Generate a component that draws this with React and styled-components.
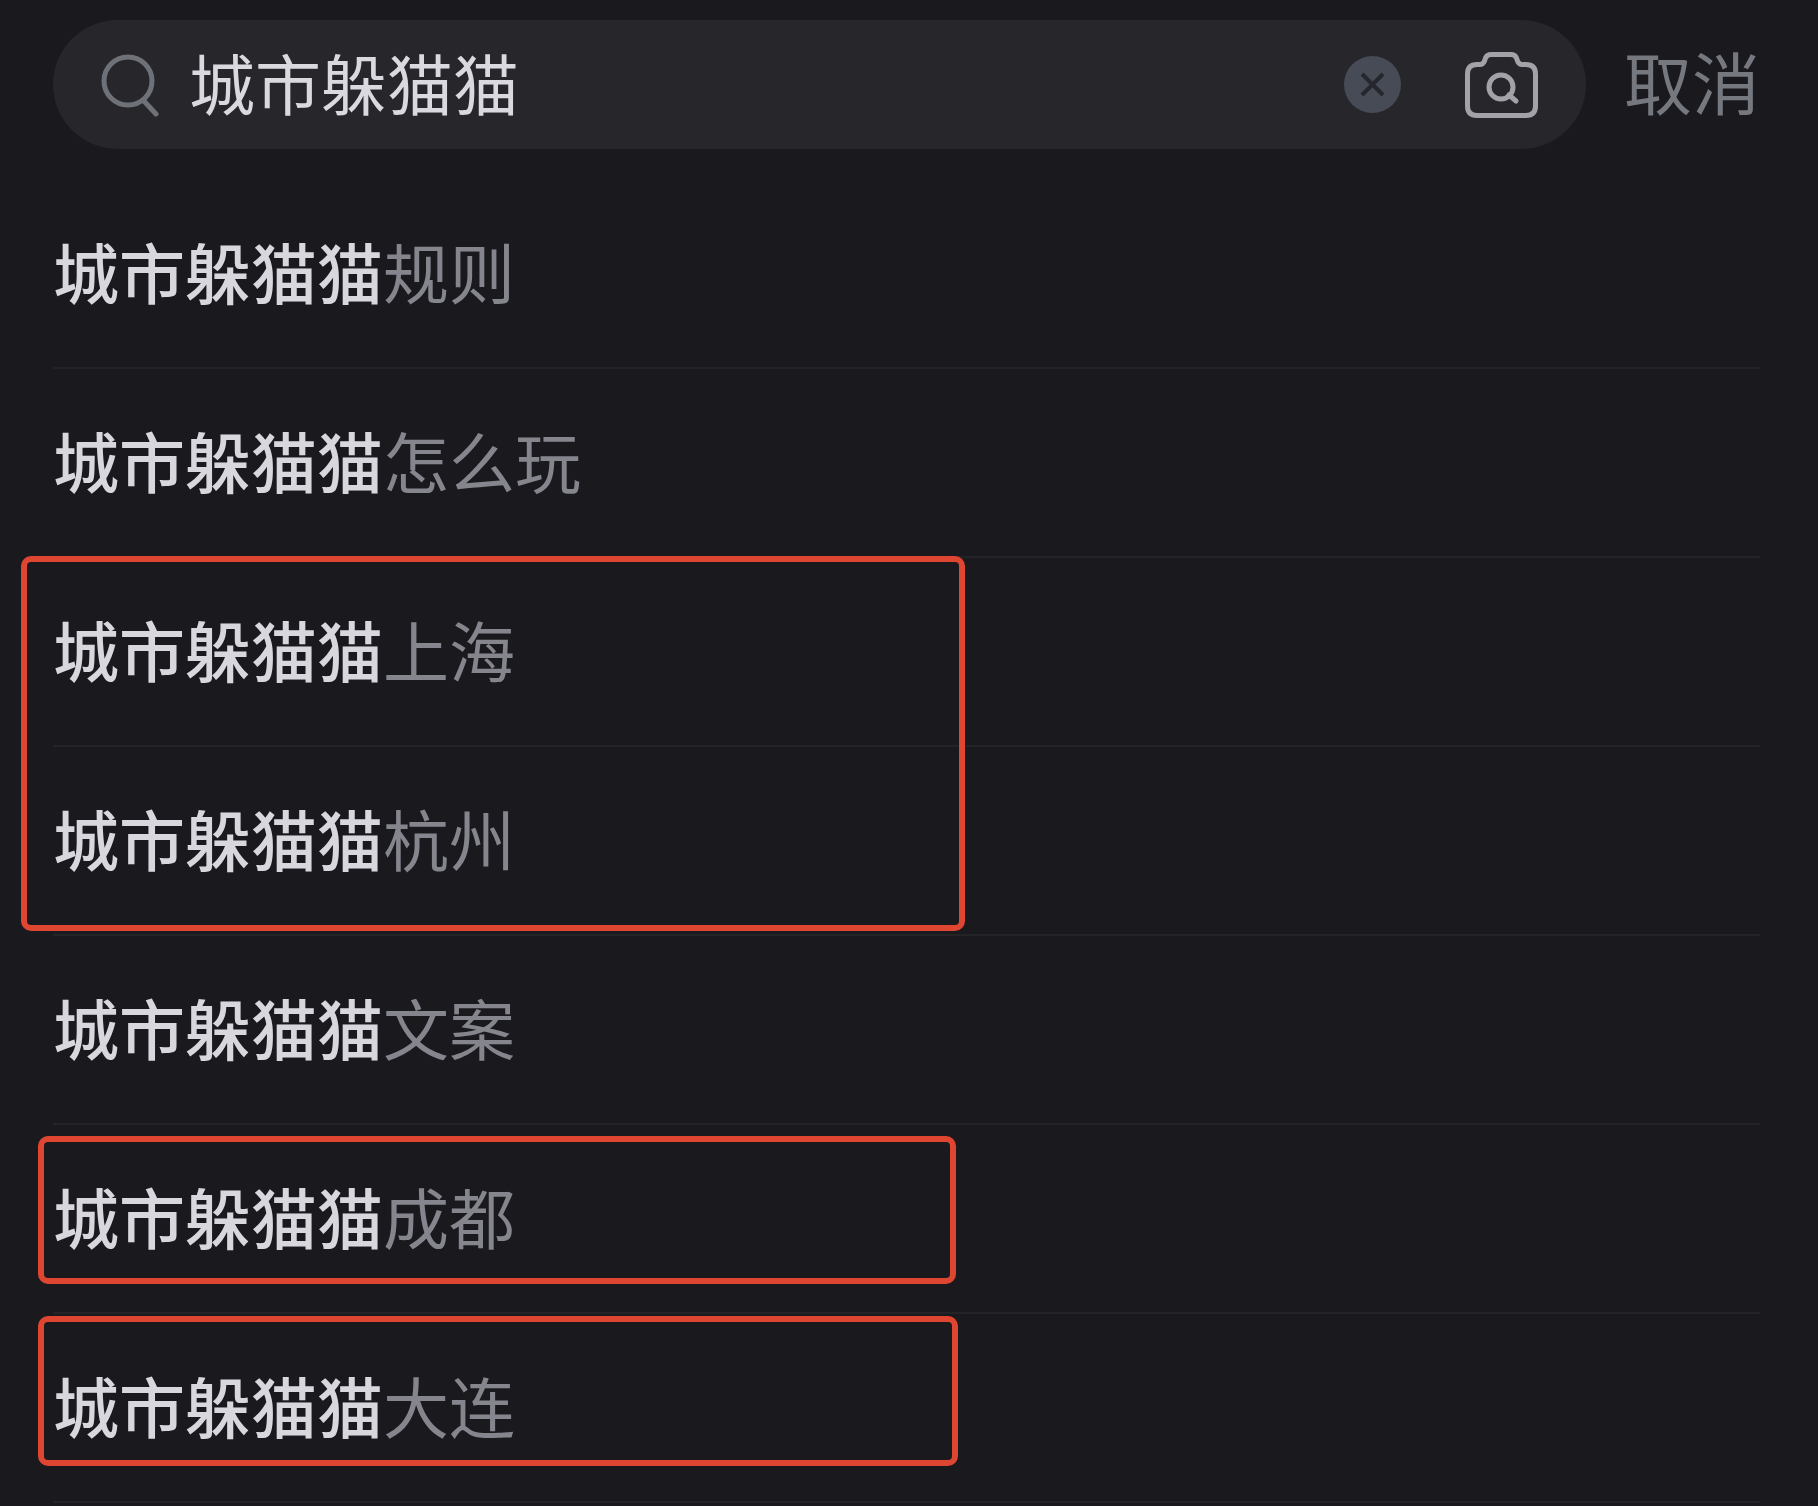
import React, { useState } from "react";
import styled, { createGlobalStyle } from "styled-components";

const GlobalStyle = createGlobalStyle`
  *, *::before, *::after { box-sizing: border-box; }
  body {
    margin: 0;
    background: #1a1a1e;
    font-family: "Noto Sans CJK SC", "Noto Sans", sans-serif;
  }
  button, input { font-family: inherit; }
`;

const Page = styled.main`
  min-height: 100vh;
  padding: 20px 58px 0 53px;
  overflow: hidden;
  background: #1a1a1e;
`;

const SearchBar = styled.form`
  display: flex;
  align-items: center;
  gap: 38px;
  margin-bottom: 31px;
`;

const SearchField = styled.div`
  display: flex;
  flex: 1;
  min-width: 0;
  align-items: center;
  height: 129px;
  padding: 0 48px;
  border-radius: 65px;
  background: #27262b;
`;

const SearchInput = styled.input`
  flex: 1;
  min-width: 0;
  height: 129px;
  margin: 0 24px 0 28px;
  padding: 0 0 8px;
  border: 0;
  outline: 0;
  background: transparent;
  color: #dad9df;
  font-size: 66px;
  font-weight: 400;
`;

const IconButton = styled.button`
  display: flex;
  flex: none;
  align-items: center;
  justify-content: center;
  margin: 0 0 0 ${(p) => p.$space || 0}px;
  padding: 0;
  border: 0;
  background: none;
  color: ${(p) => p.$color};
  cursor: pointer;
`;

const CancelButton = styled.button`
  flex: none;
  padding: 0 0 8px;
  border: 0;
  background: none;
  color: #767880;
  font-size: 68px;
  font-weight: 400;
  line-height: 72px;
  cursor: pointer;
`;

const Suggestions = styled.ul`
  margin: 0;
  padding: 0;
  list-style: none;
`;

const Suggestion = styled.li`
  position: relative;
  border-bottom: 2px solid #242428;
`;

const SuggestionLink = styled.a`
  display: block;
  padding: 54px 0 61px;
  color: #85858d;
  font-size: 66px;
  font-weight: 400;
  line-height: 72px;
  text-decoration: none;
  white-space: nowrap;
`;

const Match = styled.strong`
  color: #d8d7de;
  font-weight: 500;
`;

const Marker = styled.span`
  position: absolute;
  z-index: 1;
  top: ${(p) => p.$top}px;
  left: ${(p) => p.$left}px;
  width: ${(p) => p.$width}px;
  height: ${(p) => p.$height}px;
  border: 6px solid #de4631;
  border-radius: 10px;
  pointer-events: none;
`;

const SearchIcon = () => (
  <svg width="60" height="64" viewBox="0 0 60 64" fill="none" stroke="#6e7278" strokeWidth="5" strokeLinecap="round" aria-hidden="true">
    <circle cx="27" cy="28" r="24" />
    <path d="M42 47 L55 61" />
  </svg>
);

const ClearIcon = () => (
  <svg width="57" height="57" viewBox="0 0 57 57" fill="none" aria-hidden="true">
    <circle cx="28.5" cy="28.5" r="28.5" fill="#474b56" />
    <path d="M18 18 L39 39 M39 18 L18 39" stroke="#26272d" strokeWidth="4" />
  </svg>
);

const CameraIcon = () => (
  <svg width="73" height="66" viewBox="0 0 73 66" fill="none" stroke="currentColor" strokeWidth="5" strokeLinejoin="round" aria-hidden="true">
    <path d="M12 12.5 H15 Q18 12.5 19.5 9 L20.5 6 Q22 2.5 26 2.5 H46 Q50 2.5 51.5 6 L52.5 9 Q54 12.5 57 12.5 H61 Q70.5 12.5 70.5 22 V54 Q70.5 63.5 61 63.5 H12 Q2.5 63.5 2.5 54 V22 Q2.5 12.5 12 12.5 Z" />
    <circle cx="36" cy="35" r="12" />
    <path d="M44 43 L51 49" strokeLinecap="round" />
  </svg>
);

const KEYWORD = "城市躲猫猫";

const ITEMS = [
  { rest: "规则" },
  { rest: "怎么玩" },
  { rest: "上海", marker: { top: -2, left: -32, width: 944, height: 375 } },
  { rest: "杭州" },
  { rest: "文案" },
  { rest: "成都", marker: { top: 11, left: -15, width: 918, height: 148 } },
  { rest: "大连", marker: { top: 2, left: -15, width: 920, height: 150 } },
];

export default function App() {
  const [query, setQuery] = useState(KEYWORD);
  return (
    <>
      <GlobalStyle />
      <Page>
        <SearchBar role="search" onSubmit={(e) => e.preventDefault()}>
          <SearchField>
            <SearchIcon />
            <SearchInput aria-label="搜索" value={query} onChange={(e) => setQuery(e.target.value)} />
            <IconButton type="button" aria-label="清除" onClick={() => setQuery("")}>
              <ClearIcon />
            </IconButton>
            <IconButton type="button" aria-label="拍照搜索" $space={64} $color="#a3a2a8">
              <CameraIcon />
            </IconButton>
          </SearchField>
          <CancelButton type="button">取消</CancelButton>
        </SearchBar>
        <Suggestions>
          {ITEMS.map(({ rest, marker }) => (
            <Suggestion key={rest}>
              <SuggestionLink href="#">
                <Match>{KEYWORD}</Match>
                {rest}
              </SuggestionLink>
              {marker && (
                <Marker $top={marker.top} $left={marker.left} $width={marker.width} $height={marker.height} />
              )}
            </Suggestion>
          ))}
        </Suggestions>
      </Page>
    </>
  );
}
